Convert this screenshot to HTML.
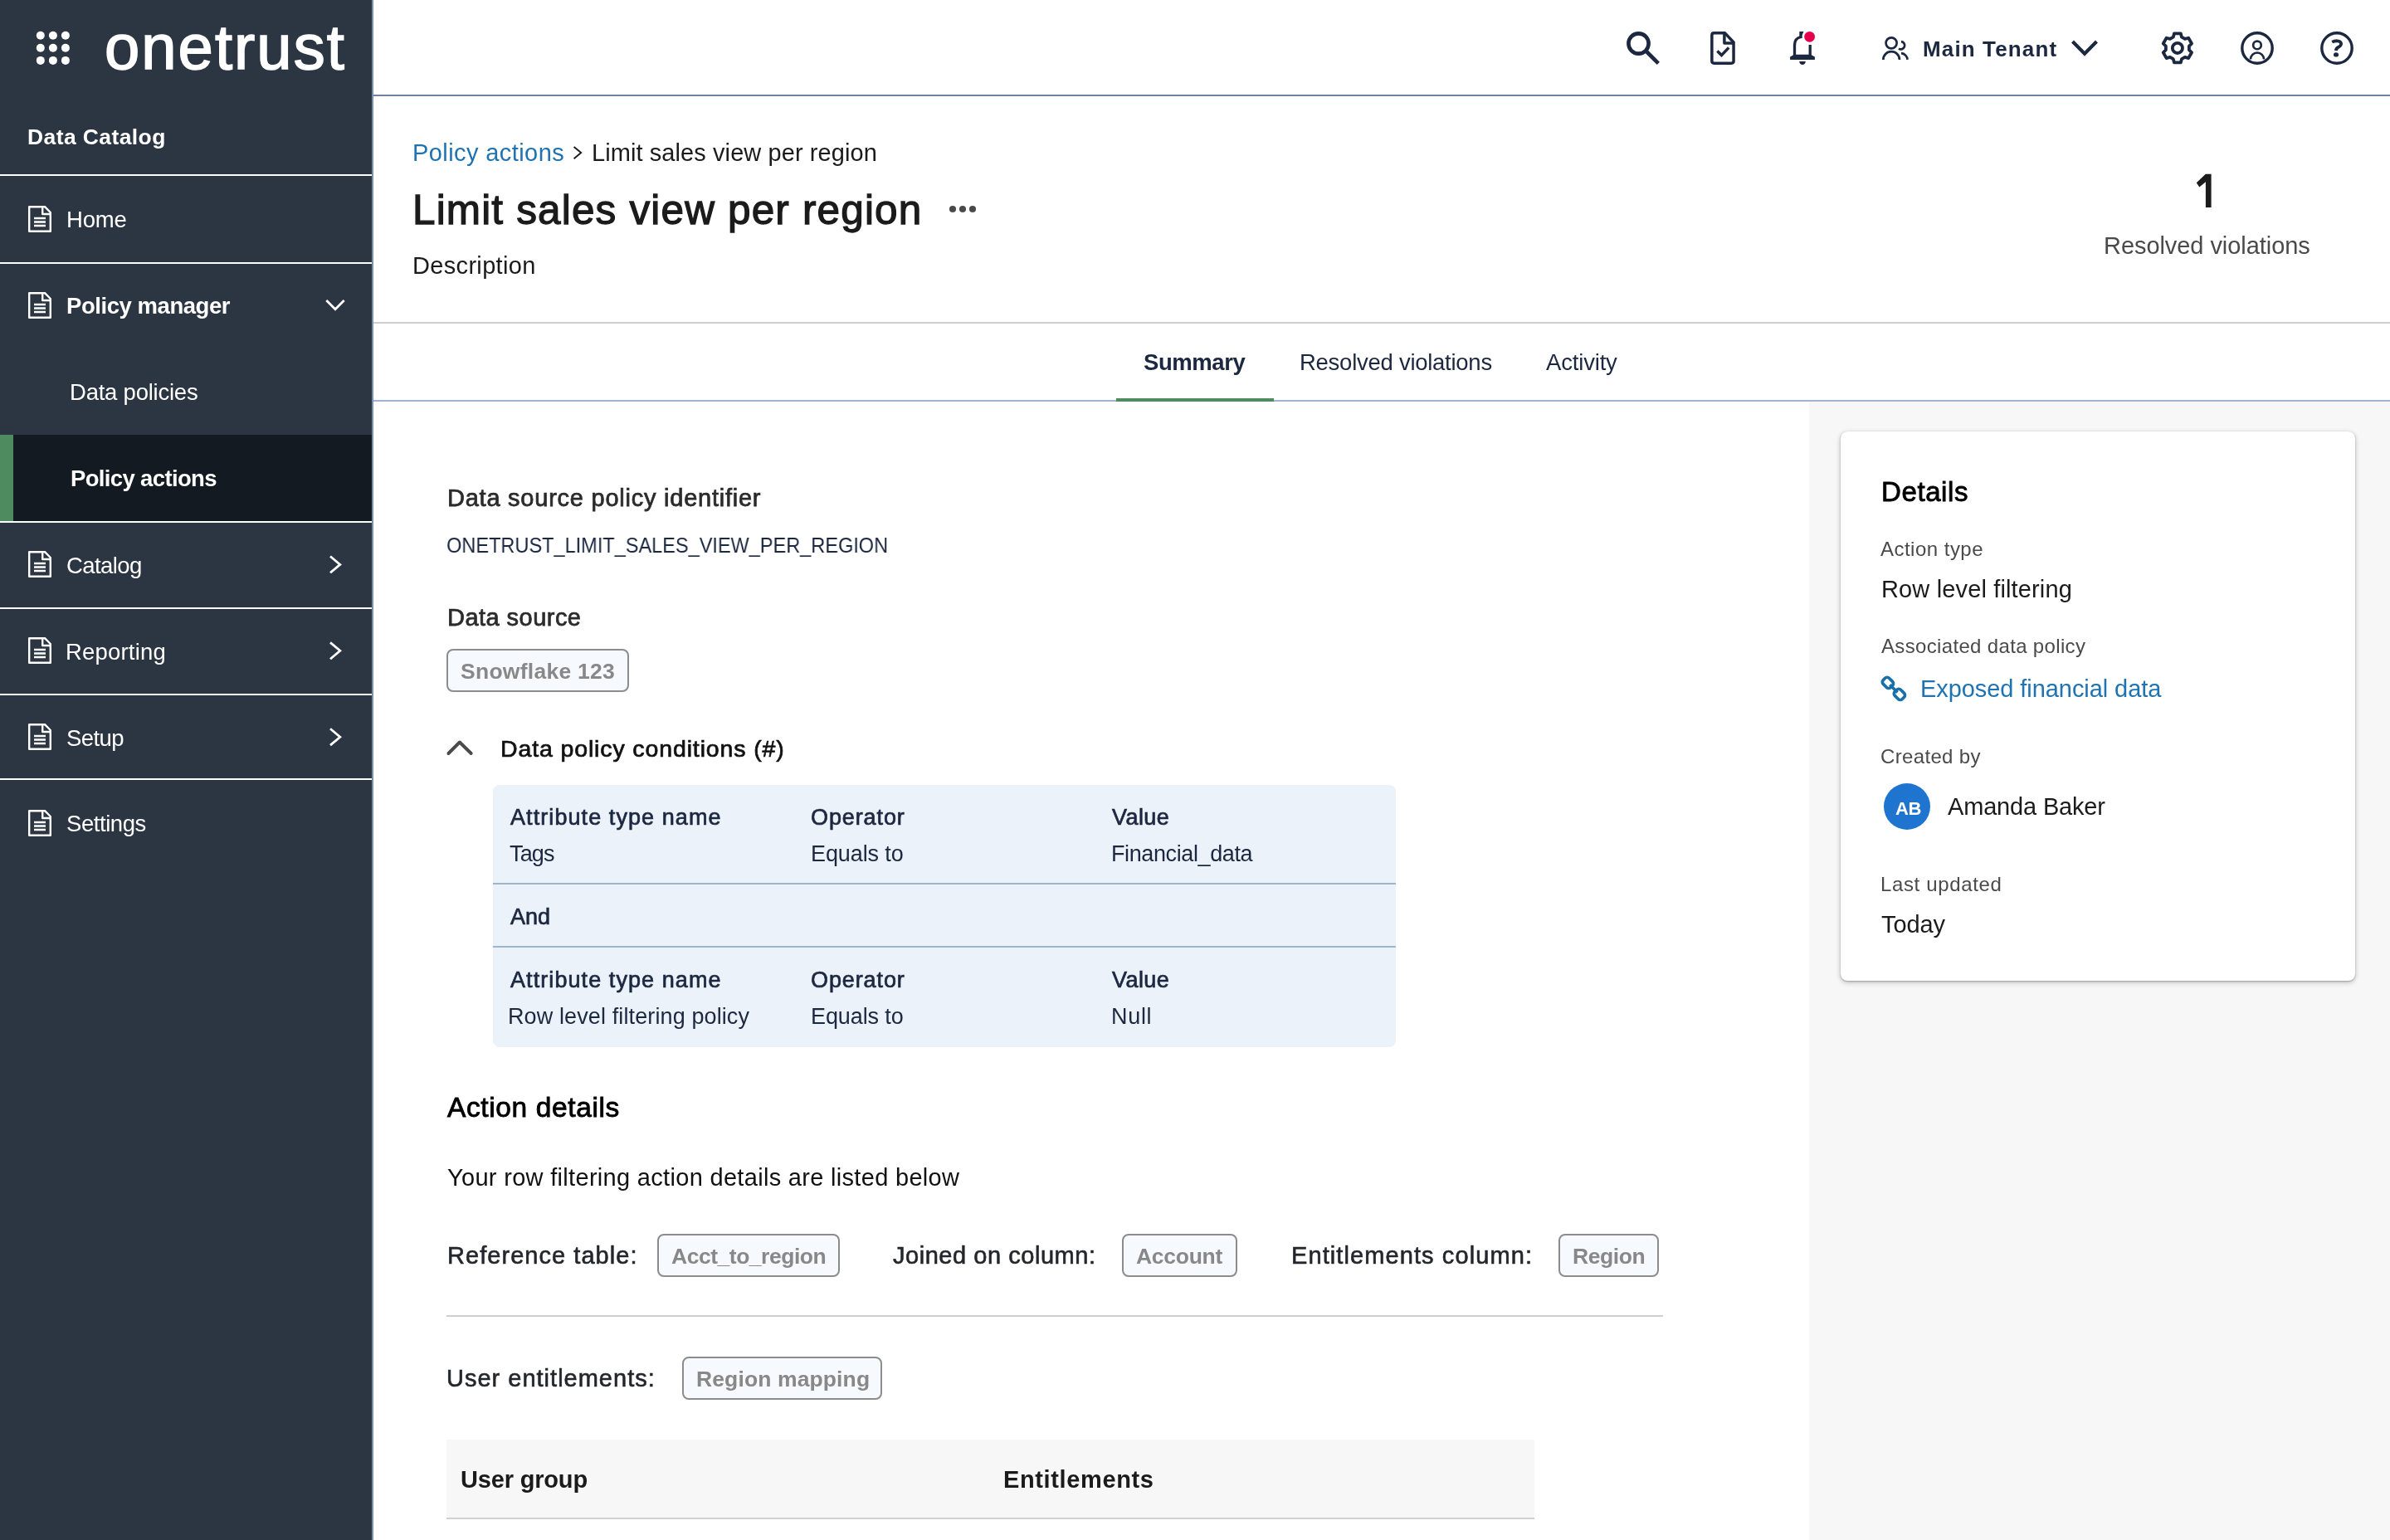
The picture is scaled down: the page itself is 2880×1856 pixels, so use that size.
<!DOCTYPE html>
<html><head><meta charset="utf-8"><title>Limit sales view per region</title>
<style>
html,body{margin:0;padding:0;width:2880px;height:1856px;overflow:hidden;background:#fff;font-family:"Liberation Sans",sans-serif}
.t{position:absolute;white-space:pre;will-change:transform}
.r{position:absolute}
svg.i{position:absolute;overflow:visible}
@media (max-width:2000px){html{zoom:0.5}}
</style></head><body>
<!-- sidebar -->
<div class="r" style="left:0;top:0;width:448px;height:1856px;background:#2c3542"></div>
<div class="r" style="left:448px;top:0;width:2px;height:1856px;background:#7b91a9"></div>
<div class="r" style="left:0;top:524px;width:448px;height:104px;background:#131a21"></div>
<div class="r" style="left:0;top:524px;width:16px;height:104px;background:#4e8b5f"></div>
<div class="r" style="left:0;top:210px;width:448px;height:2px;background:#fff"></div>
<div class="r" style="left:0;top:316px;width:448px;height:2px;background:#fff"></div>
<div class="r" style="left:0;top:628px;width:448px;height:2px;background:#fff"></div>
<div class="r" style="left:0;top:732px;width:448px;height:2px;background:#fff"></div>
<div class="r" style="left:0;top:836px;width:448px;height:2px;background:#fff"></div>
<div class="r" style="left:0;top:938px;width:448px;height:2px;background:#fff"></div>
<svg class="i" style="left:0;top:0" width="448" height="1100" viewBox="0 0 448 1100">
 <g fill="#fff">
  <circle cx="48.8" cy="42.8" r="5"/><circle cx="63.9" cy="42.8" r="5"/><circle cx="78.9" cy="42.8" r="5"/>
  <circle cx="48.8" cy="57.8" r="5"/><circle cx="63.9" cy="57.8" r="5"/><circle cx="78.9" cy="57.8" r="5"/>
  <circle cx="48.8" cy="72.9" r="5"/><circle cx="63.9" cy="72.9" r="5"/><circle cx="78.9" cy="72.9" r="5"/>
 </g>
 <g transform="translate(34,248)" fill="none" stroke="#fff" stroke-width="2.4" stroke-linejoin="round">
   <path d="M1.2,1.2 H20 L26.8,8 V30.8 H1.2 Z"/>
   <path d="M17.2,1.2 V10 H26.8"/>
   <path d="M7,15 H21 M7,19.5 H21 M7,24 H21" stroke-linejoin="miter"/>
  </g>
 <g transform="translate(34,352)" fill="none" stroke="#fff" stroke-width="2.4" stroke-linejoin="round">
   <path d="M1.2,1.2 H20 L26.8,8 V30.8 H1.2 Z"/>
   <path d="M17.2,1.2 V10 H26.8"/>
   <path d="M7,15 H21 M7,19.5 H21 M7,24 H21" stroke-linejoin="miter"/>
  </g>
 <g transform="translate(34,664)" fill="none" stroke="#fff" stroke-width="2.4" stroke-linejoin="round">
   <path d="M1.2,1.2 H20 L26.8,8 V30.8 H1.2 Z"/>
   <path d="M17.2,1.2 V10 H26.8"/>
   <path d="M7,15 H21 M7,19.5 H21 M7,24 H21" stroke-linejoin="miter"/>
  </g>
 <g transform="translate(34,768)" fill="none" stroke="#fff" stroke-width="2.4" stroke-linejoin="round">
   <path d="M1.2,1.2 H20 L26.8,8 V30.8 H1.2 Z"/>
   <path d="M17.2,1.2 V10 H26.8"/>
   <path d="M7,15 H21 M7,19.5 H21 M7,24 H21" stroke-linejoin="miter"/>
  </g>
 <g transform="translate(34,872)" fill="none" stroke="#fff" stroke-width="2.4" stroke-linejoin="round">
   <path d="M1.2,1.2 H20 L26.8,8 V30.8 H1.2 Z"/>
   <path d="M17.2,1.2 V10 H26.8"/>
   <path d="M7,15 H21 M7,19.5 H21 M7,24 H21" stroke-linejoin="miter"/>
  </g>
 <g transform="translate(34,976)" fill="none" stroke="#fff" stroke-width="2.4" stroke-linejoin="round">
   <path d="M1.2,1.2 H20 L26.8,8 V30.8 H1.2 Z"/>
   <path d="M17.2,1.2 V10 H26.8"/>
   <path d="M7,15 H21 M7,19.5 H21 M7,24 H21" stroke-linejoin="miter"/>
  </g>
 <g fill="none" stroke="#fff" stroke-width="2.8">
  <polyline points="393.3,362 404,372.8 414.7,362"/>
  <polyline points="398,670.5 409.8,680.4 398,690.3"/>
  <polyline points="398,774.4 409.8,784.3 398,794.2"/>
  <polyline points="398,878.3 409.8,888.2 398,898.1"/>
 </g>
</svg>
<!-- top header -->
<div class="r" style="left:450px;top:114px;width:2430px;height:2px;background:#6b83a0"></div>
<svg class="i" style="left:1900px;top:0" width="980" height="114" viewBox="1900 0 980 114">
 <g fill="none" stroke="#1c2740">
  <!-- search -->
  <g transform="translate(1954,32)" stroke-width="4.6">
   <circle cx="20.5" cy="20.5" r="12.1"/>
   <path d="M29,29 L44.3,44.3"/>
  </g>
  <!-- doc check -->
  <g transform="translate(2054,32)" stroke-width="3.5" stroke-linejoin="round">
   <path d="M11.5,7.85 H24.6 L35.05,19 V41.5 Q35.05,44.15 32.4,44.15 H11.5 Q8.85,44.15 8.85,41.5 V10.5 Q8.85,7.85 11.5,7.85 Z"/>
   <path d="M23.9,8 V19.9 H35"/>
   <path d="M15.4,29.4 L20.5,34.6 L29.2,25.4" stroke-linejoin="miter"/>
  </g>
  <!-- bell -->
  <g transform="translate(2146,32)" stroke-width="3.3">
   <path d="M16.5,37 V22.5 C16.5,17 19.5,13.4 24,12.5"/>
   <path d="M35.2,22 V37"/>
  </g>
 </g>
 <g fill="#1c2740">
  <g transform="translate(2146,32)">
   <path d="M11.1,39.9 V36.6 L16,33.8 H35.9 L40.9,36.6 V39.9 Z"/>
   <path d="M22.1,42 H29.9 Q29.2,45.9 26,45.9 Q22.8,45.9 22.1,42 Z"/>
   <path d="M22.3,6.1 H27.4 L25.7,10.2 V14.1 L22.3,14.3 Z"/>
  </g>
 </g>
 <circle cx="2180.6" cy="44.3" r="6.4" fill="#e6004c"/>
 <g fill="none" stroke="#1c2740">
  <!-- users -->
  <g transform="translate(2258,32)" stroke-width="2.7">
   <circle cx="21.1" cy="19.85" r="6.55"/>
   <path d="M11.35,39.9 A9.8,9.8 0 0 1 30.95,39.9"/>
   <path d="M33,18.2 A4.6,4.6 0 1 1 30,26.6"/>
   <path d="M33,32.1 A8.2,8.2 0 0 1 40.5,39.9"/>
  </g>
  <!-- tenant chevron -->
  <polyline points="2497.5,50 2512,64.8 2526.5,50" stroke-width="4.2"/>
  <!-- gear -->
  <g transform="translate(2598,32)" stroke-width="3.8" stroke-linejoin="round">
   <path d="M20.81,12.64 L22.00,8.33 L29.80,8.33 L30.99,12.64 L34.84,14.86 L39.17,13.74 L43.07,20.49 L39.93,23.68 L39.93,28.12 L43.07,31.31 L39.17,38.06 L34.84,36.94 L30.99,39.16 L29.80,43.47 L22.00,43.47 L20.81,39.16 L16.96,36.94 L12.63,38.06 L8.73,31.31 L11.87,28.12 L11.87,23.68 L8.73,20.49 L12.63,13.74 L16.96,14.86 Z"/>
   <circle cx="25.9" cy="25.9" r="6.1"/>
  </g>
  <!-- user circle -->
  <g transform="translate(2694,32)">
   <circle cx="26" cy="26" r="18.2" stroke-width="3.4"/>
   <circle cx="25.95" cy="22.45" r="4.8" stroke-width="2.7"/>
   <path d="M17.9,39.6 A8.1,8.1 0 0 1 34.1,39.6" stroke-width="2.7"/>
  </g>
  <!-- help -->
  <g transform="translate(2790,32)">
   <circle cx="26" cy="26" r="18.2" stroke-width="3.4"/>
   <path d="M20.2,18.6 C23.5,17 29,16.4 30.8,19.4 C32,21.8 30,23.8 27.5,25 C25.6,26 25,27.2 24.8,29" stroke-width="3.8"/>
  </g>
 </g>
 <ellipse cx="2815" cy="65.9" rx="3.0" ry="2.7" fill="#1c2740"/>
</svg>
<!-- page header -->
<div class="r" style="left:450px;top:388px;width:2430px;height:2px;background:#cfcfcf"></div>
<svg class="i" style="left:450px;top:116px" width="1000" height="300" viewBox="450 116 1000 300">
 <polyline points="691.6,177 700.2,184.1 691.6,191.2" fill="none" stroke="#1b1b1b" stroke-width="1.9"/>
 <g fill="#4a4a4a"><circle cx="1148" cy="252" r="4.05"/><circle cx="1160" cy="252" r="4.05"/><circle cx="1172" cy="252" r="4.05"/></g>
</svg>
<svg class="i" style="left:2640px;top:205px" width="30" height="50" viewBox="2640 205 30 50"><path d="M2657.8,209.7 H2664.6 V250 H2657.9 V219.2 L2650.3,225.4 L2646.8,220.3 Z" fill="#1b1b1b"/></svg>
<!-- tabs -->
<div class="r" style="left:450px;top:482px;width:2430px;height:2px;background:#a0b4cf"></div>
<div class="r" style="left:1345px;top:480px;width:190px;height:4px;background:#4e8b5f"></div>
<!-- right panel -->
<div class="r" style="left:2180px;top:484px;width:700px;height:1372px;background:#f7f7f7"></div>
<div class="r" style="left:2218px;top:520px;width:620px;height:662px;background:#fff;border-radius:8px;box-shadow:0 2px 6px rgba(0,0,0,0.24),0 1px 2px rgba(0,0,0,0.2),0 0 1px rgba(0,0,0,0.16)"></div>
<svg class="i" style="left:2258px;top:806px" width="48" height="48" viewBox="0 0 48 48">
 <g fill="none" stroke="#1a6fa8" stroke-width="3.7">
  <rect x="-6.3" y="-5" width="12.6" height="10" rx="3.4" transform="translate(16.9,16.9) rotate(45)"/>
  <rect x="-6.3" y="-5" width="12.6" height="10" rx="3.4" transform="translate(30.9,30.9) rotate(45)"/>
  <path d="M19.3,19.3 L28.5,28.5"/>
 </g>
</svg>
<div class="r" style="left:2270px;top:944px;width:56px;height:56px;border-radius:50%;background:#1f74d0"></div>
<!-- main: chips -->
<div class="r" style="left:538px;top:782px;width:216px;height:48px;border:2px solid #8c8c8c;border-radius:8px;background:#f6f9fd"></div>
<svg class="i" style="left:530px;top:880px" width="50" height="40" viewBox="530 880 50 40">
 <polyline points="540.4,908 553.9,894.5 567.7,908" fill="none" stroke="#4a4a4a" stroke-width="3.9" stroke-linecap="round" stroke-linejoin="round"/>
</svg>
<div class="r" style="left:594px;top:946px;width:1088px;height:316px;background:#ecf2f9;border-radius:8px"></div>
<div class="r" style="left:594px;top:1064px;width:1088px;height:2px;background:#9fb5cc"></div>
<div class="r" style="left:594px;top:1140px;width:1088px;height:2px;background:#9fb5cc"></div>
<div class="r" style="left:792px;top:1487px;width:216px;height:48px;border:2px solid #8c8c8c;border-radius:8px;background:#f6f9fd"></div>
<div class="r" style="left:1352px;top:1487px;width:135px;height:48px;border:2px solid #8c8c8c;border-radius:8px;background:#f6f9fd"></div>
<div class="r" style="left:1878px;top:1487px;width:117px;height:48px;border:2px solid #8c8c8c;border-radius:8px;background:#f6f9fd"></div>
<div class="r" style="left:538px;top:1585px;width:1466px;height:2px;background:#cfcfcf"></div>
<div class="r" style="left:822px;top:1635px;width:237px;height:48px;border:2px solid #8c8c8c;border-radius:8px;background:#f6f9fd"></div>
<div class="r" style="left:538px;top:1735px;width:1311px;height:94px;background:#f7f7f7"></div>
<div class="r" style="left:538px;top:1829px;width:1311px;height:2px;background:#d0d0d0"></div>
<div class="t" id="logo" style="left:126.0px;top:11.2px;font-size:76.0px;line-height:92px;letter-spacing:2.029px;color:#ffffff;font-weight:400;-webkit-text-stroke:1.6px #ffffff">onetrust</div>
<div class="t" id="sb_dc" style="left:32.9px;top:149.1px;font-size:26.5px;line-height:32px;letter-spacing:0.401px;color:#ffffff;font-weight:700">Data Catalog</div>
<div class="t" id="sb_home" style="left:80.0px;top:248.0px;font-size:27.5px;line-height:33px;letter-spacing:-0.187px;color:#ffffff;font-weight:400">Home</div>
<div class="t" id="sb_pm" style="left:80.3px;top:352.3px;font-size:27.5px;line-height:33px;letter-spacing:-0.445px;color:#ffffff;font-weight:700">Policy manager</div>
<div class="t" id="sb_dp" style="left:83.8px;top:456.2px;font-size:27.5px;line-height:33px;letter-spacing:-0.233px;color:#ffffff;font-weight:400">Data policies</div>
<div class="t" id="sb_pa" style="left:84.8px;top:560.0px;font-size:27.5px;line-height:33px;letter-spacing:-0.649px;color:#ffffff;font-weight:700">Policy actions</div>
<div class="t" id="sb_cat" style="left:79.9px;top:664.6px;font-size:27.5px;line-height:33px;letter-spacing:-0.582px;color:#ffffff;font-weight:400">Catalog</div>
<div class="t" id="sb_rep" style="left:79.2px;top:768.5px;font-size:27.5px;line-height:33px;letter-spacing:0.182px;color:#ffffff;font-weight:400">Reporting</div>
<div class="t" id="sb_setup" style="left:79.9px;top:873.1px;font-size:27.5px;line-height:33px;letter-spacing:-0.593px;color:#ffffff;font-weight:400">Setup</div>
<div class="t" id="sb_settings" style="left:79.9px;top:976.1px;font-size:27.5px;line-height:33px;letter-spacing:-0.445px;color:#ffffff;font-weight:400">Settings</div>
<div class="t" id="hd_tenant" style="left:2317.4px;top:42.8px;font-size:26.0px;line-height:32px;letter-spacing:1.132px;color:#1c2740;font-weight:700">Main Tenant</div>
<div class="t" id="bc_link" style="left:496.5px;top:166.8px;font-size:29.0px;line-height:35px;letter-spacing:0.415px;color:#1f73b2;font-weight:400">Policy actions</div>
<div class="t" id="bc_cur" style="left:712.5px;top:166.8px;font-size:29.0px;line-height:35px;letter-spacing:0.082px;color:#1b1b1b;font-weight:400">Limit sales view per region</div>
<div class="t" id="title" style="left:496.9px;top:222.7px;font-size:49.5px;line-height:60px;letter-spacing:1.154px;color:#1b1b1b;font-weight:400;-webkit-text-stroke:1.28px #1b1b1b">Limit sales view per region</div>
<div class="t" id="desc" style="left:496.8px;top:303.0px;font-size:29.0px;line-height:35px;letter-spacing:0.327px;color:#1b1b1b;font-weight:400">Description</div>
<div class="t" id="cnt_lbl" style="left:2535.0px;top:278.9px;font-size:29.0px;line-height:35px;letter-spacing:-0.059px;color:#4a4a4a;font-weight:400">Resolved violations</div>
<div class="t" id="tab1" style="left:1378.0px;top:419.9px;font-size:27.5px;line-height:33px;letter-spacing:-0.423px;color:#1c2740;font-weight:700">Summary</div>
<div class="t" id="tab2" style="left:1566.4px;top:419.9px;font-size:27.5px;line-height:33px;letter-spacing:-0.266px;color:#1c2740;font-weight:400">Resolved violations</div>
<div class="t" id="tab3" style="left:1863.4px;top:419.9px;font-size:27.5px;line-height:33px;letter-spacing:-0.177px;color:#1c2740;font-weight:400">Activity</div>
<div class="t" id="lbl_id" style="left:538.7px;top:582.9px;font-size:29.0px;line-height:35px;letter-spacing:0.76px;color:#2b2b2b;font-weight:400;-webkit-text-stroke:0.75px #2b2b2b">Data source policy identifier</div>
<div class="t" id="val_id" style="left:538.3px;top:640.9px;font-size:26.5px;line-height:32px;letter-spacing:0px;color:#1c2740;font-weight:400;transform:scaleX(0.8876);transform-origin:1.0px 0">ONETRUST_LIMIT_SALES_VIEW_PER_REGION</div>
<div class="t" id="lbl_ds" style="left:538.9px;top:726.9px;font-size:29.0px;line-height:35px;letter-spacing:0.462px;color:#2b2b2b;font-weight:400;-webkit-text-stroke:0.75px #2b2b2b">Data source</div>
<div class="t" id="chip_sf" style="left:555.0px;top:792.9px;font-size:26.5px;line-height:32px;letter-spacing:0.258px;color:#888888;font-weight:700">Snowflake 123</div>
<div class="t" id="cond_t" style="left:603.0px;top:884.6px;font-size:28.5px;line-height:35px;letter-spacing:0.871px;color:#111111;font-weight:400;-webkit-text-stroke:0.74px #111111">Data policy conditions (#)</div>
<div class="t" id="c1h1" style="left:614.8px;top:968.9px;font-size:27.0px;line-height:33px;letter-spacing:1.077px;color:#1c2740;font-weight:400;-webkit-text-stroke:0.7px #1c2740">Attribute type name</div>
<div class="t" id="c1h2" style="left:977.2px;top:968.9px;font-size:27.0px;line-height:33px;letter-spacing:0.892px;color:#1c2740;font-weight:400;-webkit-text-stroke:0.7px #1c2740">Operator</div>
<div class="t" id="c1h3" style="left:1340.4px;top:968.9px;font-size:27.0px;line-height:33px;letter-spacing:0.441px;color:#1c2740;font-weight:400;-webkit-text-stroke:0.7px #1c2740">Value</div>
<div class="t" id="c1v1" style="left:614.4px;top:1012.9px;font-size:27.0px;line-height:33px;letter-spacing:-0.844px;color:#1c2740;font-weight:400">Tags</div>
<div class="t" id="c1v2" style="left:976.5px;top:1012.9px;font-size:27.0px;line-height:33px;letter-spacing:-0.107px;color:#1c2740;font-weight:400">Equals to</div>
<div class="t" id="c1v3" style="left:1338.8px;top:1012.9px;font-size:27.0px;line-height:33px;letter-spacing:-0.393px;color:#1c2740;font-weight:400">Financial_data</div>
<div class="t" id="and" style="left:614.8px;top:1088.6px;font-size:27.0px;line-height:33px;letter-spacing:-0.062px;color:#1c2740;font-weight:400;-webkit-text-stroke:0.7px #1c2740">And</div>
<div class="t" id="c2h1" style="left:614.8px;top:1164.6px;font-size:27.0px;line-height:33px;letter-spacing:1.077px;color:#1c2740;font-weight:400;-webkit-text-stroke:0.7px #1c2740">Attribute type name</div>
<div class="t" id="c2h2" style="left:977.2px;top:1164.6px;font-size:27.0px;line-height:33px;letter-spacing:0.892px;color:#1c2740;font-weight:400;-webkit-text-stroke:0.7px #1c2740">Operator</div>
<div class="t" id="c2h3" style="left:1340.4px;top:1164.6px;font-size:27.0px;line-height:33px;letter-spacing:0.441px;color:#1c2740;font-weight:400;-webkit-text-stroke:0.7px #1c2740">Value</div>
<div class="t" id="c2v1" style="left:612.4px;top:1209.2px;font-size:27.0px;line-height:33px;letter-spacing:0.115px;color:#1c2740;font-weight:400">Row level filtering policy</div>
<div class="t" id="c2v2" style="left:976.5px;top:1209.2px;font-size:27.0px;line-height:33px;letter-spacing:-0.107px;color:#1c2740;font-weight:400">Equals to</div>
<div class="t" id="c2v3" style="left:1338.8px;top:1209.2px;font-size:27.0px;line-height:33px;letter-spacing:0.696px;color:#1c2740;font-weight:400">Null</div>
<div class="t" id="ad_t" style="left:538.9px;top:1313.9px;font-size:33.5px;line-height:41px;letter-spacing:0.625px;color:#000000;font-weight:400;-webkit-text-stroke:0.87px #000000">Action details</div>
<div class="t" id="ad_d" style="left:538.5px;top:1401.9px;font-size:29.0px;line-height:35px;letter-spacing:0.309px;color:#111111;font-weight:400">Your row filtering action details are listed below</div>
<div class="t" id="rt_l" style="left:538.7px;top:1495.8px;font-size:29.0px;line-height:35px;letter-spacing:1.044px;color:#23262b;font-weight:400;-webkit-text-stroke:0.6px #23262b">Reference table:</div>
<div class="t" id="rt_c" style="left:808.7px;top:1498.0px;font-size:26.5px;line-height:32px;letter-spacing:-0.478px;color:#888888;font-weight:700">Acct_to_region</div>
<div class="t" id="jc_l" style="left:1075.8px;top:1495.8px;font-size:29.0px;line-height:35px;letter-spacing:0.537px;color:#23262b;font-weight:400;-webkit-text-stroke:0.6px #23262b">Joined on column:</div>
<div class="t" id="jc_c" style="left:1368.6px;top:1498.0px;font-size:26.5px;line-height:32px;letter-spacing:-0.279px;color:#888888;font-weight:700">Account</div>
<div class="t" id="ec_l" style="left:1555.6px;top:1495.8px;font-size:29.0px;line-height:35px;letter-spacing:1.094px;color:#23262b;font-weight:400;-webkit-text-stroke:0.6px #23262b">Entitlements column:</div>
<div class="t" id="ec_c" style="left:1894.5px;top:1498.0px;font-size:26.5px;line-height:32px;letter-spacing:-0.423px;color:#888888;font-weight:700">Region</div>
<div class="t" id="ue_l" style="left:538.1px;top:1644.3px;font-size:29.0px;line-height:35px;letter-spacing:1.003px;color:#23262b;font-weight:400;-webkit-text-stroke:0.6px #23262b">User entitlements:</div>
<div class="t" id="ue_c" style="left:838.6px;top:1646.3px;font-size:26.5px;line-height:32px;letter-spacing:0.116px;color:#888888;font-weight:700">Region mapping</div>
<div class="t" id="tg1" style="left:555.0px;top:1765.9px;font-size:29.0px;line-height:35px;letter-spacing:-0.175px;color:#1b1b1b;font-weight:700">User group</div>
<div class="t" id="tg2" style="left:1209.3px;top:1765.9px;font-size:29.0px;line-height:35px;letter-spacing:0.627px;color:#1b1b1b;font-weight:700">Entitlements</div>
<div class="t" id="det_t" style="left:2267.4px;top:572.6px;font-size:33.0px;line-height:40px;letter-spacing:0.597px;color:#000000;font-weight:400;-webkit-text-stroke:0.85px #000000">Details</div>
<div class="t" id="det_at" style="left:2266.0px;top:646.6px;font-size:24.0px;line-height:29px;letter-spacing:0.481px;color:#4a4a4a;font-weight:400">Action type</div>
<div class="t" id="det_atv" style="left:2266.8px;top:692.9px;font-size:29.0px;line-height:35px;letter-spacing:0.143px;color:#1b1b1b;font-weight:400">Row level filtering</div>
<div class="t" id="det_ap" style="left:2266.9px;top:764.2px;font-size:24.0px;line-height:29px;letter-spacing:0.338px;color:#4a4a4a;font-weight:400">Associated data policy</div>
<div class="t" id="det_apv" style="left:2314.2px;top:812.8px;font-size:29.0px;line-height:35px;letter-spacing:-0.071px;color:#1f73b2;font-weight:400">Exposed financial data</div>
<div class="t" id="det_cb" style="left:2266.3px;top:896.8px;font-size:24.0px;line-height:29px;letter-spacing:0.345px;color:#4a4a4a;font-weight:400">Created by</div>
<div class="t" id="det_ab" style="left:2283.5px;top:960.5px;font-size:22.0px;line-height:27px;letter-spacing:-0.388px;color:#ffffff;font-weight:700">AB</div>
<div class="t" id="det_cbv" style="left:2346.9px;top:955.0px;font-size:29.0px;line-height:35px;letter-spacing:-0.17px;color:#1b1b1b;font-weight:400">Amanda Baker</div>
<div class="t" id="det_lu" style="left:2266.3px;top:1051.0px;font-size:24.0px;line-height:29px;letter-spacing:0.642px;color:#4a4a4a;font-weight:400">Last updated</div>
<div class="t" id="det_luv" style="left:2266.9px;top:1097.0px;font-size:29.0px;line-height:35px;letter-spacing:-0.096px;color:#1b1b1b;font-weight:400">Today</div>
</body></html>
